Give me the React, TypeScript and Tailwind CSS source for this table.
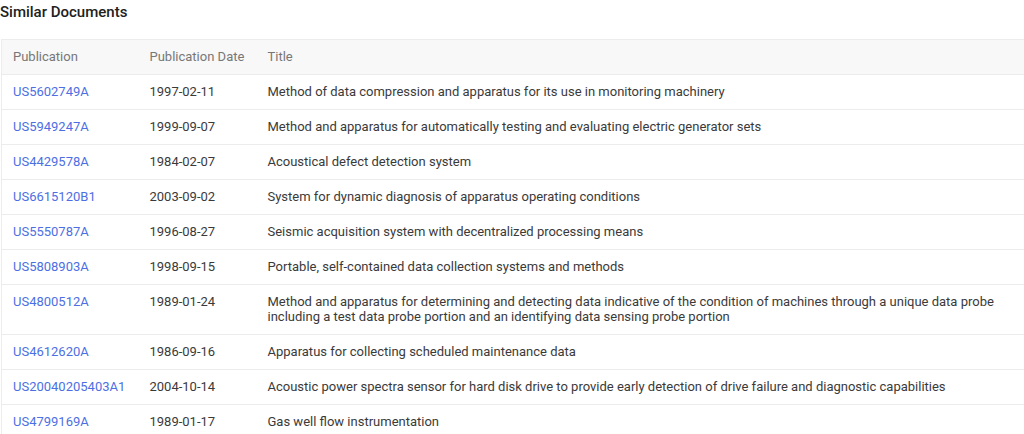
import React from "react";

const rows: [string, string, string][] = [
  ["US5602749A", "1997-02-11", "Method of data compression and apparatus for its use in monitoring machinery"],
  ["US5949247A", "1999-09-07", "Method and apparatus for automatically testing and evaluating electric generator sets"],
  ["US4429578A", "1984-02-07", "Acoustical defect detection system"],
  ["US6615120B1", "2003-09-02", "System for dynamic diagnosis of apparatus operating conditions"],
  ["US5550787A", "1996-08-27", "Seismic acquisition system with decentralized processing means"],
  ["US5808903A", "1998-09-15", "Portable, self-contained data collection systems and methods"],
  ["US4800512A", "1989-01-24", "Method and apparatus for determining and detecting data indicative of the condition of machines through a unique data probe including a test data probe portion and an identifying data sensing probe portion"],
  ["US4612620A", "1986-09-16", "Apparatus for collecting scheduled maintenance data"],
  ["US20040205403A1", "2004-10-14", "Acoustic power spectra sensor for hard disk drive to provide early detection of drive failure and diagnostic capabilities"],
  ["US4799169A", "1989-01-17", "Gas well flow instrumentation"],
];

export default function App() {
  return (
    <div className="bg-white w-[1024px] h-[434px] overflow-hidden" style={{ fontFamily: "Roboto, 'Liberation Sans', sans-serif" }}>
      <h2 className="mt-[2px] mb-[17px] text-[15px] leading-[20px] font-medium text-[#212121]">Similar Documents</h2>
      <table className="ml-px w-[1023px] table-fixed border-collapse text-[13px] leading-[15px]">
        <colgroup>
          <col className="w-[136px]" />
          <col className="w-[118px]" />
          <col />
        </colgroup>
        <thead>
          <tr className="bg-[#f8f8f8] border-t border-b border-[#ececec]">
            <th className="border-l border-[#ececec] text-left font-normal text-[#777777] pl-[11px] pt-[9px] pb-[10px]">Publication</th>
            <th className="text-left font-normal text-[#777777] pl-3 pt-[9px] pb-[10px]">Publication Date</th>
            <th className="text-left font-normal text-[#777777] pl-3 pt-[9px] pb-[10px]">Title</th>
          </tr>
        </thead>
        <tbody>
          {rows.map(([id, date, title]) => (
            <tr key={id} className="border-b border-[#ececec]">
              <td className="border-l border-[#ececec] align-top pl-[11px] pt-[9px] pb-[10px] text-[#4d6fe3]">{id}</td>
              <td className="align-top pl-3 pt-[9px] pb-[10px] text-[#3a3a3a]">{date}</td>
              <td className="align-top pl-3 pr-3 pt-[9px] pb-[10px] text-[#3a3a3a]">{title}</td>
            </tr>
          ))}
        </tbody>
      </table>
    </div>
  );
}
